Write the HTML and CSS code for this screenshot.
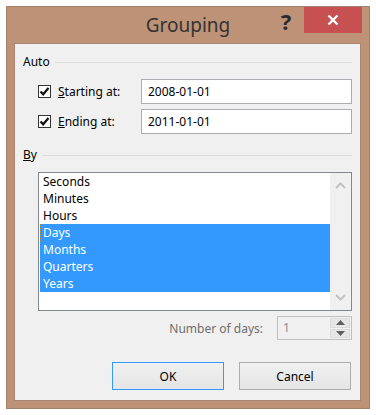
FILE: index.html
```html
<!DOCTYPE html>
<html lang="en">

<head>
    <meta charset="UTF-8">
    <meta name="viewport" content="width=device-width, initial-scale=1.0">
    <title>Grouping</title>
    <link rel="stylesheet" href="styles.css">
</head>

<body>
    <div class="window">
        <div class="titlebar">
            <span></span>
            <span class="title">Grouping</span>
            <div class="controls">
                <span class="help">?</span>
                <span class="close">
                    <svg width="12" height="12" viewBox="0 0 12 12">
                        <path d="M1.5 1.5 L10.5 10.5 M10.5 1.5 L1.5 10.5" stroke="#fff" stroke-width="2.4" />
                    </svg>
                </span>
            </div>
        </div>

        <div class="client">
            <div class="group-head">
                <span>Auto</span>
                <span class="rule"></span>
            </div>

            <div class="row first">
                <label class="check">
                    <span class="box">
                        <svg width="11" height="11" viewBox="0 0 11 11">
                            <path d="M1.5 5.5 L4.2 8.3 L9.5 2" fill="none" stroke="#111" stroke-width="2.2" />
                        </svg>
                    </span>
                    <span><u>S</u>tarting at:</span>
                </label>
                <input class="field" type="text" value="2008-01-01">
            </div>
            <div class="row">
                <label class="check">
                    <span class="box">
                        <svg width="11" height="11" viewBox="0 0 11 11">
                            <path d="M1.5 5.5 L4.2 8.3 L9.5 2" fill="none" stroke="#111" stroke-width="2.2" />
                        </svg>
                    </span>
                    <span><u>E</u>nding at:</span>
                </label>
                <input class="field" type="text" value="2011-01-01">
            </div>

            <div class="group-head by">
                <span><u>B</u>y</span>
                <span class="rule"></span>
            </div>

            <div class="listbox">
                <ul class="items">
                    <li>Seconds</li>
                    <li>Minutes</li>
                    <li>Hours</li>
                    <li class="sel focus">Days</li>
                    <li class="sel">Months</li>
                    <li class="sel">Quarters</li>
                    <li class="sel">Years</li>
                </ul>
                <div class="scrollbar">
                    <svg width="11" height="7" viewBox="0 0 11 7">
                        <path d="M1 6 L5.5 1.5 L10 6" fill="none" stroke="#c2c2c2" stroke-width="2" />
                    </svg>
                    <svg width="11" height="7" viewBox="0 0 11 7">
                        <path d="M1 1 L5.5 5.5 L10 1" fill="none" stroke="#c2c2c2" stroke-width="2" />
                    </svg>
                </div>
            </div>

            <div class="days-row">
                <span class="days-label">Number of days:</span>
                <div class="spin">
                    <span class="spin-value">1</span>
                    <div class="spin-buttons">
                        <span class="spin-btn">
                            <svg width="9" height="5" viewBox="0 0 9 5"><path d="M0 5 L4.5 0 L9 5 Z" fill="#5f5f5f" /></svg>
                        </span>
                        <span class="spin-btn">
                            <svg width="9" height="5" viewBox="0 0 9 5"><path d="M0 0 L4.5 5 L9 0 Z" fill="#5f5f5f" /></svg>
                        </span>
                    </div>
                </div>
            </div>

            <div class="buttons">
                <button class="btn default">OK</button>
                <button class="btn">Cancel</button>
            </div>
        </div>
    </div>
</body>

</html>
```

FILE: styles.css
```css
* {
    margin: 0;
    padding: 0;
    box-sizing: border-box;
}

body {
    background: #fff;
    font-family: "Noto Sans", "Open Sans", sans-serif;
    font-size: 12px;
    color: #000;
}

.window {
    margin: 6px;
    width: 364px;
    height: 403px;
    background: #bd9276;
    border: 1px solid #a4806a;
}

.titlebar {
    height: 36px;
    display: grid;
    grid-template-columns: 1fr auto 1fr;
}

.title {
    padding-top: 6px;
    font-size: 19px;
    line-height: 24px;
    color: #333;
}

.controls {
    display: flex;
    justify-content: flex-end;
    align-items: flex-start;
    padding-right: 7px;
}

.help {
    width: 22px;
    margin-right: 7px;
    padding-top: 2px;
    text-align: center;
    font-size: 22px;
    line-height: 24px;
    font-weight: bold;
    color: #2b2b2b;
}

.close {
    width: 58px;
    height: 26px;
    background: #c75050;
    display: flex;
    align-items: center;
    justify-content: center;
}

.client {
    margin: 0 8px 7px 7px;
    height: 358px;
    background: #f0f0f0;
    border: 1px solid #a98570;
    padding: 10px 8px 10px 8px;
}

.group-head {
    display: flex;
    align-items: center;
    height: 16px;
    line-height: 16px;
}

.group-head .rule {
    flex: 1;
    height: 1px;
    background: #dcdcdc;
    margin-left: 5px;
}

.group-head.by {
    margin-top: 13px;
}

.row {
    display: flex;
    align-items: center;
    height: 25px;
    margin-top: 5px;
    padding-left: 15px;
}

.row.first {
    margin-top: 9px;
}

.check {
    width: 103px;
    display: flex;
    align-items: center;
    gap: 7px;
}

.box {
    width: 13px;
    height: 13px;
    border: 1px solid #333;
    background: #fff;
    display: flex;
    align-items: center;
    justify-content: center;
}

.field {
    flex: 1;
    height: 25px;
    border: 1px solid #abadb3;
    background: #fff;
    padding: 0 6px;
    font-family: inherit;
    font-size: 12px;
    color: #000;
}

.listbox {
    margin: 9px 0 0 15px;
    height: 139px;
    border: 1px solid #828790;
    background: #fff;
    display: flex;
}

.items {
    list-style: none;
    flex: 1;
    padding-left: 1px;
}

.items li {
    height: 17px;
    line-height: 17px;
    padding-left: 3px;
}

.items li.sel {
    background: #3399ff;
    color: #fff;
}

.items li.focus {
    border: 1px dotted #c8781e;
    line-height: 15px;
    padding-left: 2px;
}

.scrollbar {
    width: 21px;
    background: #f0f0f0;
    display: flex;
    flex-direction: column;
    align-items: center;
    justify-content: space-between;
    padding: 9px 0 9px;
}

.days-row {
    margin-top: 5px;
    display: flex;
    justify-content: flex-end;
    align-items: center;
    gap: 14px;
}

.days-label {
    color: #6d6d6d;
}

.spin {
    width: 75px;
    height: 24px;
    border: 1px solid #bfbfbf;
    background: #f0f0f0;
    display: flex;
}

.spin-value {
    flex: 1;
    padding-left: 5px;
    line-height: 22px;
    color: #8a8a8a;
}

.spin-buttons {
    width: 21px;
    display: flex;
    flex-direction: column;
    gap: 1px;
    padding: 1px 1px 1px 0;
}

.spin-btn {
    flex: 1;
    background: #e6e6e6;
    border: 1px solid #dcdcdc;
    display: flex;
    align-items: center;
    justify-content: center;
}

.buttons {
    margin-top: 22px;
    display: flex;
    justify-content: flex-end;
    gap: 15px;
    padding-right: 1px;
}

.btn {
    width: 112px;
    height: 28px;
    border: 1px solid #adadad;
    background: linear-gradient(#f0f0f0, #e5e5e5);
    font-family: inherit;
    font-size: 12px;
    color: #000;
}

.btn.default {
    border-color: #3399ff;
}
```
